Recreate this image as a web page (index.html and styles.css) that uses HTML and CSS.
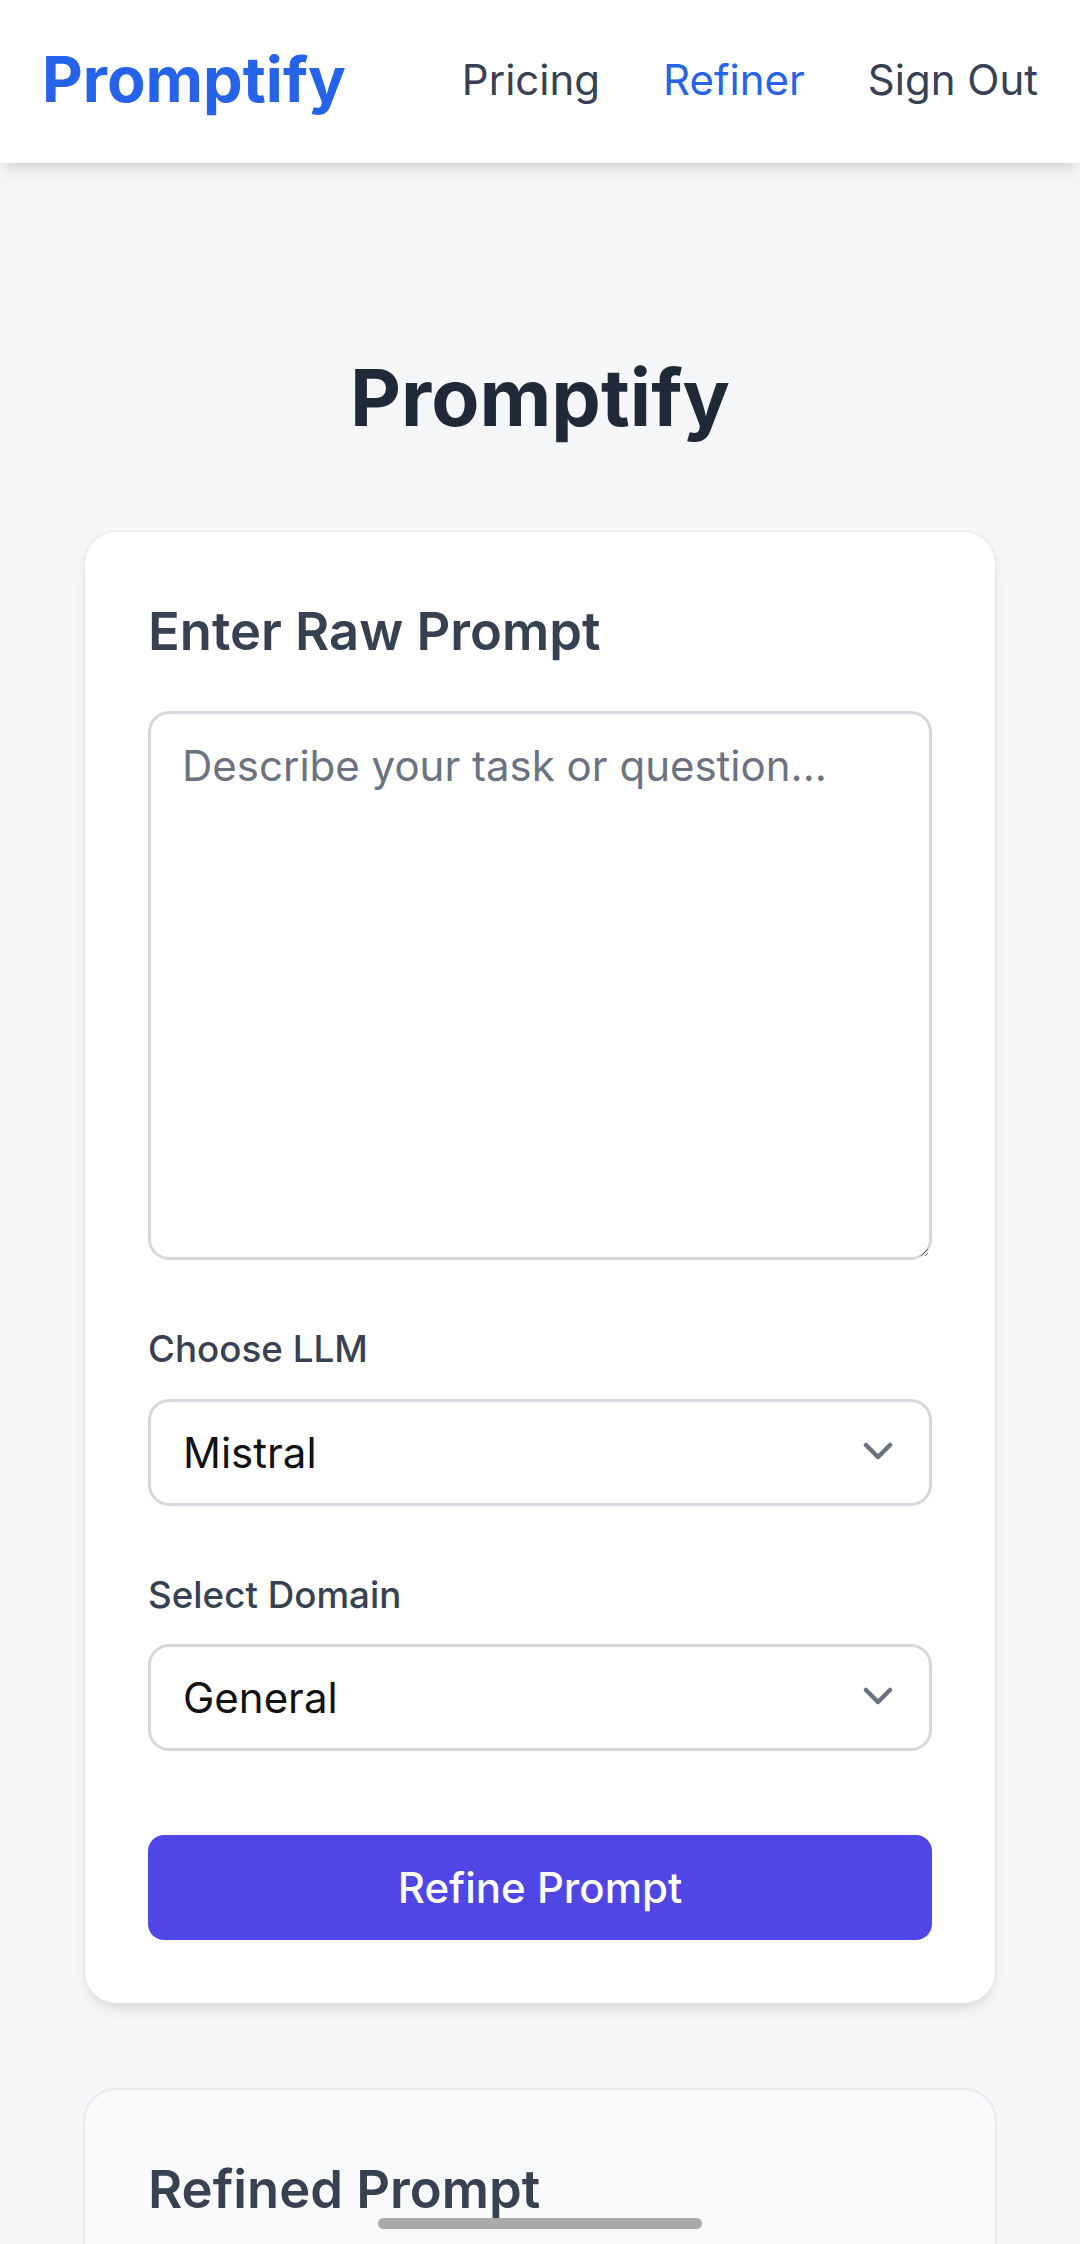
FILE: index.html
```html
<!DOCTYPE html>
<html lang="en">
<head>
<meta charset="utf-8">
<title>Promptify</title>
<link rel="stylesheet" href="styles.css">
</head>
<body>
<header class="topbar">
  <a class="logo" href="#">Promptify</a>
  <nav class="nav">
    <a class="nav-link" href="#">Pricing</a>
    <a class="nav-link active" href="#">Refiner</a>
    <a class="nav-link" href="#">Sign Out</a>
  </nav>
</header>

<main class="main">
  <h1 class="page-title">Promptify</h1>

  <section class="card">
    <h2 class="card-title">Enter Raw Prompt</h2>
    <textarea class="prompt-input" placeholder="Describe your task or question..."></textarea>

    <label class="field-label" for="llm">Choose LLM</label>
    <div class="select-wrap">
      <select id="llm" class="select">
        <option>Mistral</option>
      </select>
      <svg class="chevron" viewBox="0 0 30 20" aria-hidden="true"><path d="M3 3 L15 15 L27 3"/></svg>
    </div>

    <label class="field-label" for="domain">Select Domain</label>
    <div class="select-wrap">
      <select id="domain" class="select">
        <option>General</option>
      </select>
      <svg class="chevron" viewBox="0 0 30 20" aria-hidden="true"><path d="M3 3 L15 15 L27 3"/></svg>
    </div>

    <button class="refine-btn" type="button">Refine Prompt</button>
  </section>

  <section class="card card-result">
    <h2 class="card-title">Refined Prompt</h2>
    <div class="result-body"></div>
  </section>
</main>

<div class="gesture-bar"></div>
</body>
</html>
```

FILE: styles.css
```css
* {
  box-sizing: border-box;
}

html, body {
  margin: 0;
  padding: 0;
}

body {
  font-family: Inter, "Noto Sans", "Liberation Sans", sans-serif;
  background: #f6f7f9;
  color: #1f2937;
  min-height: 2244px;
}

.topbar {
  display: flex;
  align-items: center;
  justify-content: space-between;
  height: 163px;
  padding: 0 42px;
  padding-bottom: 5px;
  background: #ffffff;
  box-shadow: 0 10px 16px -3px rgba(0, 0, 0, 0.10), 0 4px 10px -4px rgba(0, 0, 0, 0.08);
  position: relative;
  z-index: 2;
}

.logo {
  font-size: 63px;
  line-height: 84px;
  font-weight: 700;
  color: #2563eb;
  text-decoration: none;
}

.nav {
  display: flex;
  gap: 63px;
}

.nav-link {
  font-size: 42px;
  line-height: 63px;
  color: #374151;
  text-decoration: none;
}

.nav-link.active {
  color: #2563eb;
}

.main {
  display: flex;
  flex-direction: column;
  padding: 188px 85px 0;
}

.page-title {
  margin: 0 0 86px;
  text-align: center;
  font-size: 78.75px;
  line-height: 94.5px;
  font-weight: 700;
  color: #1f2937;
}

.card {
  display: flex;
  flex-direction: column;
  background: #ffffff;
  border-radius: 31.5px;
  padding: 63px;
  box-shadow: 0 0 0 2px rgba(229, 231, 235, 0.6), 0 10px 16px -3px rgba(0, 0, 0, 0.09), 0 4px 10px -4px rgba(0, 0, 0, 0.08);
}

.card-title {
  margin: 0 0 43px;
  font-size: 52.5px;
  line-height: 73.5px;
  font-weight: 600;
  color: #374151;
}

.prompt-input {
  display: block;
  width: 100%;
  height: 549px;
  margin: 0 0 63px;
  padding: 20px 31px;
  border: 3px solid #d5d8dd;
  border-radius: 21px;
  font-family: inherit;
  font-size: 42px;
  line-height: 63px;
  color: #111827;
  background: #ffffff;
  resize: vertical;
  outline: none;
}

.prompt-input::placeholder {
  color: #6b7280;
}

.field-label {
  display: block;
  margin-bottom: 23px;
  font-size: 36.75px;
  line-height: 52.5px;
  font-weight: 500;
  color: #374151;
}

.select-wrap {
  position: relative;
  margin-bottom: 63px;
}

.select {
  display: block;
  width: 100%;
  height: 107px;
  padding: 0 80px 0 32px;
  border: 3px solid #d5d8dd;
  border-radius: 21px;
  background: #ffffff;
  font-family: inherit;
  font-size: 42px;
  line-height: 63px;
  color: #111111;
  -webkit-appearance: none;
  appearance: none;
  outline: none;
}

.chevron {
  position: absolute;
  right: 39px;
  top: 43px;
  width: 30px;
  height: 20px;
  fill: none;
  stroke: #6b7280;
  stroke-width: 4.5;
  stroke-linecap: round;
  stroke-linejoin: round;
  pointer-events: none;
}

.refine-btn {
  display: block;
  width: 100%;
  height: 105px;
  margin-top: 21px;
  border: none;
  border-radius: 16px;
  background: #4f46e5;
  color: #ffffff;
  font-family: inherit;
  font-size: 42px;
  line-height: 63px;
  font-weight: 500;
  cursor: pointer;
}

.card-result {
  margin-top: 87px;
  background: #f9fafb;
  box-shadow: 0 0 0 2px #e8eaee, 0 4px 10px -4px rgba(0, 0, 0, 0.05);
}

.result-body {
  min-height: 300px;
}

.gesture-bar {
  position: fixed;
  left: 378px;
  top: 2218px;
  width: 324px;
  height: 11px;
  border-radius: 6px;
  background: #a9aaa9;
  z-index: 10;
}
```
